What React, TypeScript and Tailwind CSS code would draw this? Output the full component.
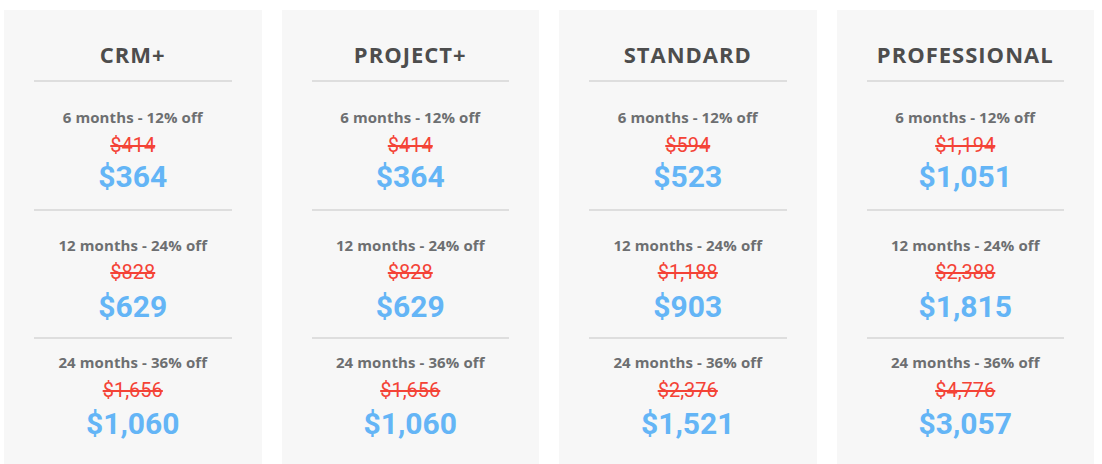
import React from "react";

type Tier = { label: string; old: string; price: string };
type Plan = { name: string; tiers: Tier[] };

const plans: Plan[] = [
  {
    name: "CRM+",
    tiers: [
      { label: "6 months - 12% off", old: "$414", price: "$364" },
      { label: "12 months - 24% off", old: "$828", price: "$629" },
      { label: "24 months - 36% off", old: "$1,656", price: "$1,060" },
    ],
  },
  {
    name: "PROJECT+",
    tiers: [
      { label: "6 months - 12% off", old: "$414", price: "$364" },
      { label: "12 months - 24% off", old: "$828", price: "$629" },
      { label: "24 months - 36% off", old: "$1,656", price: "$1,060" },
    ],
  },
  {
    name: "STANDARD",
    tiers: [
      { label: "6 months - 12% off", old: "$594", price: "$523" },
      { label: "12 months - 24% off", old: "$1,188", price: "$903" },
      { label: "24 months - 36% off", old: "$2,376", price: "$1,521" },
    ],
  },
  {
    name: "PROFESSIONAL",
    tiers: [
      { label: "6 months - 12% off", old: "$1,194", price: "$1,051" },
      { label: "12 months - 24% off", old: "$2,388", price: "$1,815" },
      { label: "24 months - 36% off", old: "$4,776", price: "$3,057" },
    ],
  },
];

const headFont = { fontFamily: '"Open Sans", "DejaVu Sans", sans-serif' };
const priceFont = { fontFamily: 'Roboto, "Liberation Sans", sans-serif' };

function Divider({ className }: { className: string }) {
  return <div className={`h-[2px] bg-[#dedede] mx-[30px] ${className}`} />;
}

function Section({
  tier,
  subMt,
  oldMt,
  newMt,
}: {
  tier: Tier;
  subMt: string;
  oldMt: string;
  newMt: string;
}) {
  return (
    <div className="flex flex-col items-center">
      <div
        className={`${subMt} text-[15px] leading-[20px] font-bold text-[#6d6f71] tracking-[0.1px]`}
        style={headFont}
      >
        {tier.label}
      </div>
      <div
        className={`${oldMt} text-[20px] leading-[24px] text-[#f44336] line-through`}
        style={priceFont}
      >
        {tier.old}
      </div>
      <div
        className={`${newMt} text-[30px] leading-[36px] font-bold text-[#64b5f6]`}
        style={priceFont}
      >
        {tier.price}
      </div>
    </div>
  );
}

function Card({ plan }: { plan: Plan }) {
  return (
    <div className="bg-[#f7f7f7] flex flex-col pt-[30px]">
      <div
        className="text-center text-[22px] leading-[28px] font-bold text-[#4d4d4d] tracking-[1px]"
        style={headFont}
      >
        {plan.name}
      </div>
      <Divider className="mt-[12px]" />
      <Section tier={plan.tiers[0]} subMt="mt-[25px]" oldMt="mt-[6px]" newMt="mt-[2px]" />
      <Divider className="mt-[14px]" />
      <Section tier={plan.tiers[1]} subMt="mt-[24px]" oldMt="mt-[5px]" newMt="mt-[5px]" />
      <Divider className="mt-[12px]" />
      <Section tier={plan.tiers[2]} subMt="mt-[13px]" oldMt="mt-[6px]" newMt="mt-[4px]" />
    </div>
  );
}

export default function App() {
  return (
    <div className="h-[464px] w-full overflow-hidden bg-white pt-[10px] pl-[4px] pr-[8px]">
      <div className="grid grid-cols-4 gap-[20px] h-full">
        {plans.map((p) => (
          <Card key={p.name} plan={p} />
        ))}
      </div>
    </div>
  );
}
